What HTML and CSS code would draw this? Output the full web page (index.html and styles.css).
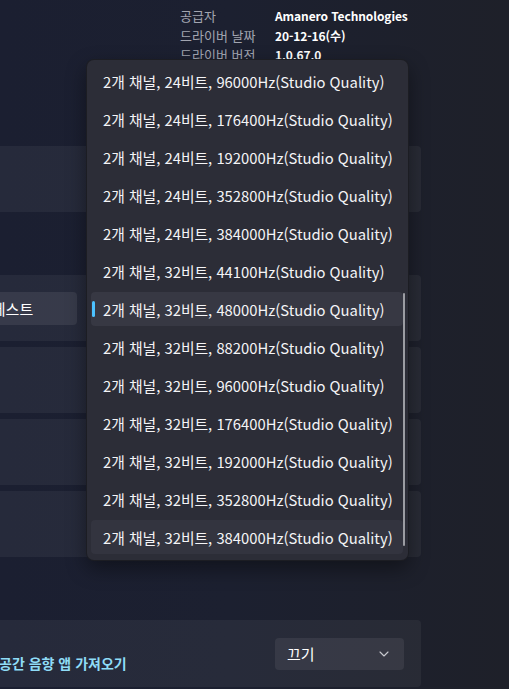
FILE: index.html
```html
<!DOCTYPE html>
<html lang="ko">
<head>
<meta charset="utf-8">
<title>Sound properties</title>
<link rel="stylesheet" href="styles.css">
</head>
<body>
<div class="page">
  <div class="col">
    <section class="info">
      <span class="label">공급자</span><span class="value">Amanero Technologies</span>
      <span class="label">드라이버 날짜</span><span class="value">20-12-16(수)</span>
      <span class="label">드라이버 버전</span><span class="value">1.0.67.0</span>
    </section>

    <div class="card card-first"></div>

    <div class="group">
      <div class="card card-row"><button class="btn">테스트</button></div>
      <div class="card"></div>
      <div class="card"></div>
      <div class="card"></div>
    </div>

    <div class="card card-bottom">
      <a class="link">공간 음향 앱 가져오기</a>
      <div class="select">
        <span>끄기</span>
        <svg class="chev" width="10" height="6" viewBox="0 0 10 6"><path d="M1 1l4 4 4-4" fill="none" stroke="#c9cad0" stroke-width="1.1" stroke-linecap="round" stroke-linejoin="round"/></svg>
      </div>
    </div>
  </div>

  <div class="menu">
    <div class="item">2개 채널, 24비트, 96000Hz(Studio Quality)</div>
    <div class="item">2개 채널, 24비트, 176400Hz(Studio Quality)</div>
    <div class="item">2개 채널, 24비트, 192000Hz(Studio Quality)</div>
    <div class="item">2개 채널, 24비트, 352800Hz(Studio Quality)</div>
    <div class="item">2개 채널, 24비트, 384000Hz(Studio Quality)</div>
    <div class="item">2개 채널, 32비트, 44100Hz(Studio Quality)</div>
    <div class="item selected">2개 채널, 32비트, 48000Hz(Studio Quality)</div>
    <div class="item">2개 채널, 32비트, 88200Hz(Studio Quality)</div>
    <div class="item">2개 채널, 32비트, 96000Hz(Studio Quality)</div>
    <div class="item">2개 채널, 32비트, 176400Hz(Studio Quality)</div>
    <div class="item">2개 채널, 32비트, 192000Hz(Studio Quality)</div>
    <div class="item">2개 채널, 32비트, 352800Hz(Studio Quality)</div>
    <div class="item hover">2개 채널, 32비트, 384000Hz(Studio Quality)</div>
    <div class="scrollbar"></div>
  </div>
</div>
</body>
</html>
```

FILE: styles.css
```css
* { box-sizing: border-box; }
html, body {
  margin: 0;
  padding: 0;
  width: 509px;
  height: 689px;
  overflow: hidden;
}
body {
  background: linear-gradient(90deg, #1b1f31 0%, #1c2030 45%, #1e2029 100%);
  font-family: "Noto Sans CJK KR", sans-serif;
  color: #ffffff;
}
.page {
  position: relative;
  width: 509px;
  height: 689px;
}
.col {
  margin-left: -68px;
  width: 489px;
  display: flex;
  flex-direction: column;
}
.info {
  display: grid;
  grid-template-columns: 95px auto;
  margin-left: 248px;
  padding-top: 6px;
  font-size: 13px;
  line-height: 19.5px;
}
.label { color: #a2a5b0; }
.value {
  color: #ffffff;
  font-weight: 600;
  font-size: 12px;
  letter-spacing: -0.1px;
}

.card {
  height: 66px;
  background: rgba(255, 255, 255, 0.05);
  border-radius: 4px;
}
.card-first { margin-top: 81px; }
.group {
  margin-top: 63px;
  display: flex;
  flex-direction: column;
  gap: 6px;
}
.card-row {
  display: flex;
  align-items: center;
  padding-left: 16px;
}
.btn {
  width: 129px;
  height: 33px;
  border: none;
  border-radius: 4px;
  background: rgba(255, 255, 255, 0.08);
  color: #ffffff;
  font-family: inherit;
  font-size: 15px;
  margin-top: 2px;
}
.card-bottom {
  margin-top: 63px;
  height: 67px;
  display: flex;
  align-items: flex-start;
  justify-content: space-between;
  padding: 18px 17px 0 0;
}
.link {
  margin-left: 67px;
  margin-top: 15px;
  color: #8fdcf7;
  font-weight: 700;
  font-size: 14px;
  line-height: 20px;
}
.select {
  width: 129px;
  height: 32px;
  border-radius: 4px;
  background: rgba(255, 255, 255, 0.07);
  display: flex;
  align-items: center;
  justify-content: space-between;
  padding: 0 15px 0 12px;
  font-size: 15px;
}
.chev { margin-top: 1px; }

.menu {
  position: absolute;
  left: 86px;
  top: 59px;
  width: 323px;
  height: 502px;
  background: #2c2d37;
  border: 1px solid rgba(0, 0, 0, 0.35);
  border-radius: 8px;
  padding: 2px 0 4px;
  box-shadow: 0 8px 20px rgba(0, 0, 0, 0.4);
  display: flex;
  flex-direction: column;
}
.item {
  position: relative;
  flex: none;
  height: 34px;
  margin: 2px 5px 2px 4px;
  padding-left: 12px;
  border-radius: 4px;
  display: flex;
  align-items: center;
  font-size: 14.8px;
  color: #f4f4f6;
  white-space: nowrap;
}
.item.selected { background: #373843; }
.item.hover { background: #33343f; }
.item.selected::before {
  content: "";
  position: absolute;
  left: 1px;
  top: 9px;
  width: 3px;
  height: 16px;
  border-radius: 2px;
  background: #4cc2ff;
}
.scrollbar {
  position: absolute;
  right: 3px;
  top: 233px;
  width: 2px;
  height: 253px;
  border-radius: 1px;
  background: #9b9ca2;
}
```
